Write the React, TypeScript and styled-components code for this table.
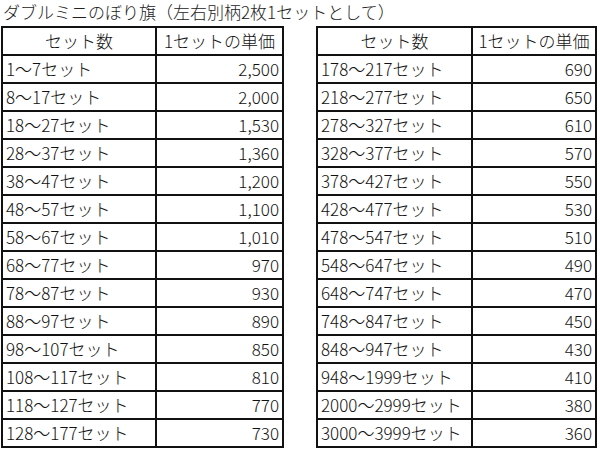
import React from 'react';
import styled, { createGlobalStyle } from 'styled-components';

const GlobalStyle = createGlobalStyle`
  body {
    margin: 0;
    background: #ffffff;
    font-family: "Noto Sans CJK JP", "Noto Sans", sans-serif;
    color: #111111;
  }
`;

const Page = styled.div`
  width: 600px;
  height: 450px;
  overflow: hidden;
`;

const Title = styled.h1`
  margin: 0;
  height: 26px;
  padding-left: 3px;
  font-size: 17px;
  font-weight: 300;
  line-height: 24px;
  color: #222222;
`;

const Tables = styled.div`
  display: flex;
  align-items: flex-start;
  gap: 32px;
  padding-left: 1px;
`;

const PriceTable = styled.table<{ $first: number; $second: number }>`
  border-collapse: collapse;
  table-layout: fixed;
  width: ${(p) => p.$first + p.$second}px;

  col:first-child {
    width: ${(p) => p.$first}px;
  }
  col:last-child {
    width: ${(p) => p.$second}px;
  }
`;

const Row = styled.tr`
  height: 28px;
`;

const Cell = styled.td<{ $align?: 'left' | 'right' | 'center' }>`
  border: 2px solid #111111;
  padding: 0 3px;
  font-size: 17px;
  font-weight: 300;
  line-height: 24px;
  text-align: ${(p) => p.$align || 'left'};
  white-space: nowrap;
`;

type Price = [string, string];

const leftRows: Price[] = [
  ['1〜7セット', '2,500'],
  ['8〜17セット', '2,000'],
  ['18〜27セット', '1,530'],
  ['28〜37セット', '1,360'],
  ['38〜47セット', '1,200'],
  ['48〜57セット', '1,100'],
  ['58〜67セット', '1,010'],
  ['68〜77セット', '970'],
  ['78〜87セット', '930'],
  ['88〜97セット', '890'],
  ['98〜107セット', '850'],
  ['108〜117セット', '810'],
  ['118〜127セット', '770'],
  ['128〜177セット', '730'],
];

const rightRows: Price[] = [
  ['178〜217セット', '690'],
  ['218〜277セット', '650'],
  ['278〜327セット', '610'],
  ['328〜377セット', '570'],
  ['378〜427セット', '550'],
  ['428〜477セット', '530'],
  ['478〜547セット', '510'],
  ['548〜647セット', '490'],
  ['648〜747セット', '470'],
  ['748〜847セット', '450'],
  ['848〜947セット', '430'],
  ['948〜1999セット', '410'],
  ['2000〜2999セット', '380'],
  ['3000〜3999セット', '360'],
];

const Table = ({ rows, first, second }: { rows: Price[]; first: number; second: number }) => (
  <PriceTable $first={first} $second={second}>
    <colgroup>
      <col />
      <col />
    </colgroup>
    <tbody>
      <Row>
        <Cell $align="center">セット数</Cell>
        <Cell $align="center">1セットの単価</Cell>
      </Row>
      {rows.map(([range, price]) => (
        <Row key={range}>
          <Cell>{range}</Cell>
          <Cell $align="right">{price}</Cell>
        </Row>
      ))}
    </tbody>
  </PriceTable>
);

const App: React.FC = () => (
  <Page>
    <GlobalStyle />
    <Title>ダブルミニのぼり旗（左右別柄2枚1セットとして）</Title>
    <Tables>
      <Table rows={leftRows} first={154} second={127} />
      <Table rows={rightRows} first={155} second={124} />
    </Tables>
  </Page>
);

export default App;
